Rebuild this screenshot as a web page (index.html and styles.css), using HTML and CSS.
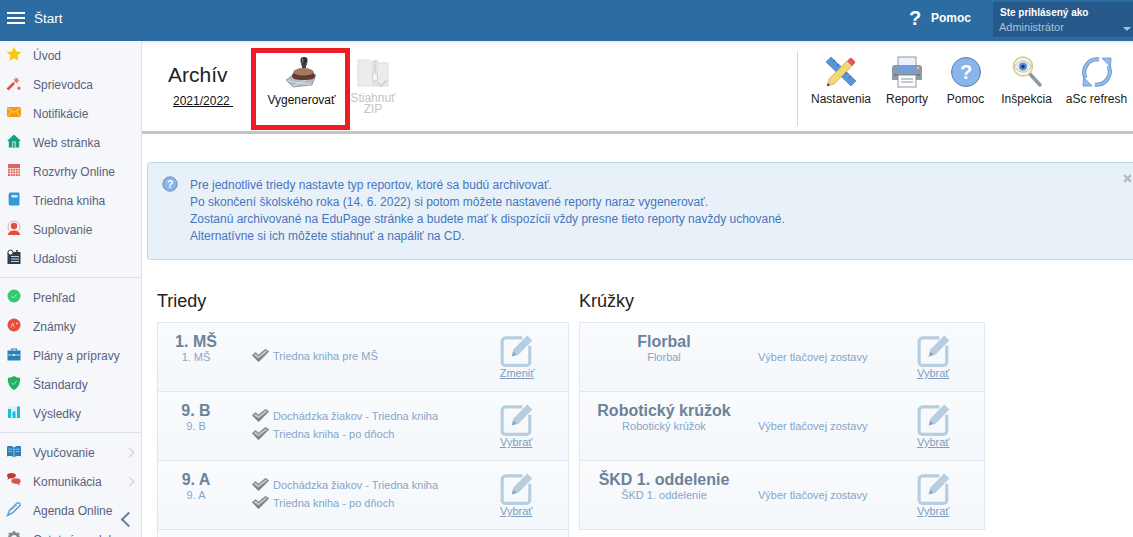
FILE: index.html
```html
<!DOCTYPE html>
<html>
  <head>
  <meta charset="utf-8">
  <title>Archív</title>
  <link rel="stylesheet" href="styles.css">
  </head>
  <body>
    <svg class="sprites" width="0" height="0">
      <symbol id="edit" viewBox="0 0 32 32">
        <path d="M21 4.500H5.500a3.500 3.500 0 0 0-3.500 3.500v19.500a3 3 0 0 0 3 3h20a3 3 0 0 0 3-3V12" fill="none" stroke="#b7cde0" stroke-width="3"/>
        <path d="M11 22l1.600-6.400L25.600 2.300l4.800 4.700L17.400 20.400z" fill="#b7cde0"/>
        <path d="M11 22l1.600-4.600 3 3z" fill="#8ba6bf"/>
      </symbol>
      <symbol id="check" viewBox="0 0 17 13">
        <path d="M0.300 6.300l3.200-2.800 3 2.400L13.500 0.300l3.300 2.300L6.500 12.800z" fill="#7d8185" stroke="#6a6f73" stroke-width="0.500"/>
        <path d="M1.500 6.300l2-1.700 3 2.500L13.600 1.300l1.800 1.100-8.900 7z" fill="#bfc2c4"/>
      </symbol>
    </svg>

    <header class="topbar">
      <div class="hamburger"><i></i><i></i><i></i></div>
      <div class="topbar-title">Štart</div>
      <div class="help"><span class="help-mark">?</span><span class="help-text">Pomoc</span></div>
      <div class="user">
        <div class="user-top">Ste prihlásený ako</div>
        <div class="user-name">Administrátor</div>
        <span class="user-caret"></span>
      </div>
    </header>

    <div class="layout">
      <nav class="sidebar">
        <div class="menu-group">
          <div class="menu-item">
            <svg class="menu-icon" viewBox="0 0 16 16"><path d="M8 .8l2.200 4.700 5.100.6-3.800 3.500 1 5.100L8 12.200l-4.500 2.500 1-5.100L.7 6.100l5.100-.6z" fill="#f7c812"/></svg>
            Úvod
          </div>
          <div class="menu-item">
            <svg class="menu-icon" viewBox="0 0 16 16"><path d="M1.500 14.500L8 8" stroke="#e74c3c" stroke-width="2.600"/><path d="M9.500 1.500l.8 2 2-.8-.5 2.200 2 1-2.200.7-.3 2.200-1.500-1.600-2 .5 1-2-1.300-1.700 2 .3z" fill="#ec7063"/><path d="M13 11.500v3.500M11.300 13.200h3.400" stroke="#e74c3c" stroke-width="1.200"/></svg>
            Sprievodca
          </div>
          <div class="menu-item">
            <svg class="menu-icon" viewBox="0 0 16 16"><rect x="1" y="3" width="14" height="10" fill="#f39c12"/><path d="M1 3.500l7 5 7-5M1 13l5-5.500M15 13l-5-5.500" fill="none" stroke="#fbdca6" stroke-width=".8"/></svg>
            Notifikácie
          </div>
          <div class="menu-item">
            <svg class="menu-icon" viewBox="0 0 16 16"><path d="M8 1.500L15 8h-1.800v6.500H2.800V8H1z" fill="#16a085"/><rect x="6.300" y="8.500" width="3.400" height="6" fill="#d8efe9"/><rect x="7.200" y="9.500" width="1.600" height="5" fill="#16a085"/></svg>
            Web stránka
          </div>
          <div class="menu-item">
            <svg class="menu-icon" viewBox="0 0 16 16"><rect x="2" y="2" width="12" height="12" fill="#d9695e"/><path d="M4.500 6v8M7 6v8M9.500 6v8M12 6v8M2 6.500h12M2 9h12M2 11.500h12" stroke="#f6d8d4" stroke-width=".9"/></svg>
            Rozvrhy Online
          </div>
          <div class="menu-item">
            <svg class="menu-icon" viewBox="0 0 16 16"><rect x="3" y="1.500" width="10.500" height="13" rx="1.200" fill="#3498db"/><rect x="5.500" y="4" width="6" height="2.500" fill="#d4eafa"/><path d="M3 3.500v9" stroke="#1f6fa8" stroke-width="1" stroke-dasharray="1 1"/></svg>
            Triedna kniha
          </div>
          <div class="menu-item">
            <svg class="menu-icon" viewBox="0 0 16 16"><circle cx="8" cy="7" r="6" fill="none" stroke="#f0a79f" stroke-width="1"/><circle cx="8" cy="6" r="3.200" fill="#e74c3c"/><path d="M1.800 15c.4-3 3-4.600 6.200-4.600s5.800 1.600 6.200 4.600z" fill="#e74c3c"/></svg>
            Suplovanie
          </div>
          <div class="menu-item">
            <svg class="menu-icon" viewBox="0 0 16 16"><rect x="1.500" y="3" width="13" height="12" fill="#2c3e50"/><circle cx="4.500" cy="3.500" r="2.500" fill="#fff" stroke="#2c3e50"/><path d="M5 7.500h8M5 10h8M5 12.500h8" stroke="#c8d0d8" stroke-width="1.200"/><path d="M11 1v3" stroke="#2c3e50" stroke-width="1.500"/></svg>
            Udalosti
          </div>
        </div>
        <div class="menu-group">
          <div class="menu-item">
            <svg class="menu-icon" viewBox="0 0 16 16"><circle cx="8" cy="8" r="6.500" fill="#2ecc71"/><path d="M5.500 8.200l1.800 1.800 3.300-3.600" fill="none" stroke="#c9f3da" stroke-width=".9"/></svg>
            Prehľad
          </div>
          <div class="menu-item">
            <svg class="menu-icon" viewBox="0 0 16 16"><circle cx="8" cy="8" r="6.500" fill="#e74c3c"/><path d="M5 10.500l1.700-4.500 1.600 4.500M10 6.500h2M11 5.500v2" fill="none" stroke="#f8c9c4" stroke-width=".9"/></svg>
            Známky
          </div>
          <div class="menu-item">
            <svg class="menu-icon" viewBox="0 0 16 16"><path d="M1.500 4.500h13v10h-13z" fill="#2980b9"/><path d="M5.500 4.500V3h5v1.500" fill="none" stroke="#2980b9" stroke-width="1.200"/><path d="M1.500 9h13" stroke="#cfe3f2" stroke-width=".9"/><rect x="7" y="8" width="2" height="2" fill="#cfe3f2"/></svg>
            Plány a prípravy
          </div>
          <div class="menu-item">
            <svg class="menu-icon" viewBox="0 0 16 16"><path d="M8 1c2 1.300 4 1.800 6.200 1.800 0 5.500-1.500 9.700-6.200 12.200C3.300 12.500 1.800 8.300 1.800 2.800 4 2.800 6 2.300 8 1z" fill="#27ae60"/><path d="M5.600 7.800l1.800 1.800 3.200-3.400" fill="none" stroke="#c9f3da" stroke-width=".9"/></svg>
            Štandardy
          </div>
          <div class="menu-item">
            <svg class="menu-icon" viewBox="0 0 16 16"><rect x="2" y="2.500" width="12" height="11.500" fill="#d6f1f8"/><rect x="2" y="5" width="3" height="9" fill="#1ebbdc"/><rect x="6.500" y="7.500" width="3" height="6.500" fill="#1ebbdc"/><rect x="11" y="2.500" width="3" height="11.500" fill="#1ebbdc"/></svg>
            Výsledky
          </div>
        </div>
        <div class="menu-group">
          <div class="menu-item">
            <svg class="menu-icon" viewBox="0 0 16 16"><path d="M1 3.500c2.500-.8 5-.5 7 1 2-1.500 4.500-1.800 7-1v10c-2.500-.8-5-.5-7 1-2-1.500-4.500-1.800-7-1z" fill="#2980b9"/><path d="M8 4.500v10M2.500 6c1.300-.2 2.500 0 3.700.5M2.500 8.500c1.300-.2 2.500 0 3.700.5M13.500 6c-1.300-.2-2.500 0-3.700.5M13.500 8.500c-1.300-.2-2.500 0-3.700.5" fill="none" stroke="#cfe3f2" stroke-width=".7"/></svg>
            Vyučovanie
            <span class="chevron"></span>
          </div>
          <div class="menu-item">
            <svg class="menu-icon" viewBox="0 0 16 16"><path d="M1 3.500C1 2 3 1 5.500 1S10 2 10 3.500 8 6.500 5.500 6.500c-.7 0-1.300 0-1.800-.2L1.500 8l.5-2.500C1.300 5 1 4.300 1 3.500z" fill="#c0392b"/><path d="M5 9c0-1.800 2.300-3 5-3s5 1.200 5 3c0 1-.6 1.700-1.400 2.200L14 14l-3-2c-3.500.3-6-1-6-3z" fill="#d9534f" stroke="#f5f7fa" stroke-width=".5"/></svg>
            Komunikácia
            <span class="chevron"></span>
          </div>
          <div class="menu-item">
            <svg class="menu-icon" viewBox="0 0 16 16"><path d="M1.500 14.500l2-5L11 2c1.500-1 3.500.5 3 2.500l-7.500 7.500z" fill="none" stroke="#5b9bd5" stroke-width="1.400"/><path d="M4.500 9.500L11 4M7 11.500L13 6" stroke="#5b9bd5" stroke-width=".9"/></svg>
            Agenda Online
          </div>
          <div class="menu-item">
            <svg class="menu-icon" viewBox="0 0 16 16"><circle cx="8" cy="8" r="4.500" fill="none" stroke="#7f8c8d" stroke-width="3"/><path d="M8 1v3M8 12v3M1 8h3M12 8h3M3 3l2 2M11 11l2 2M13 3l-2 2M5 11l-2 2" stroke="#7f8c8d" stroke-width="2"/></svg>
            Ostatné moduly
          </div>
        </div>
        <span class="collapse"></span>
      </nav>

      <main class="main">
        <section class="toolbar">
          <div class="archive">
            <div class="archive-title">Archív</div>
            <a class="archive-year">2021/2022&nbsp;</a>
          </div>
          <div class="generate">
            <svg class="tool-icon" viewBox="0 0 32 32">
              <path d="M1 23l13-10 17 5-4 10-19 2z" fill="#b4bbc2" stroke="#8f979e" stroke-width=".8"/>
              <path d="M2.500 23.500L15 26l13-7M8 29l7-3 11 1.500" fill="none" stroke="#dde1e4" stroke-width=".9"/>
              <path d="M7 19c0-3 3.500-5 11.500-5S30 16 30 19s-4 4-11.500 4S7 22 7 19z" fill="#5f3b30"/>
              <path d="M8 15.500c1-3 5-4.500 10.500-4.500s9.500 1.500 10.500 4.500c-1.800 2-5.700 3-10.500 3S9.800 17.500 8 15.500z" fill="#a47865"/>
              <path d="M17 11c0-2.500-.6-3.500-1.500-4.500h7c-.9 1-1.500 2-1.500 4.500z" fill="#3d4247"/>
              <rect x="15.500" y="0" width="7" height="7" rx="3" fill="#2f3338"/>
              <rect x="17" y="1.500" width="1.300" height="4" fill="#7b8187"/>
            </svg>
            <div class="tool-label">Vygenerovať</div>
          </div>
          <div class="download">
            <svg class="tool-icon" viewBox="0 0 32 32">
              <path d="M1 3h11l3 3h16v23H1z" fill="#ececec" stroke="#dcdcdc"/>
              <path d="M15 3h6v26h-6z" fill="#e3e3e3"/>
              <path d="M17 5h2M17 8h2M17 11h2M17 14h2" stroke="#cfcfcf" stroke-width="1.400"/>
              <rect x="15.500" y="16" width="5" height="8" rx="2.500" fill="#f6f6f6" stroke="#cccccc"/>
              <path d="M21 26l3 3 6-6" fill="none" stroke="#d4d4d4" stroke-width="2"/>
            </svg>
            <div class="tool-label">Stiahnuť ZIP</div>
          </div>
          <div class="tools">
            <div class="tool">
              <svg class="tool-icon" viewBox="0 0 32 32">
                <path d="M6 1l25 24-5 5L1 6z" fill="#5b94d6" stroke="#3f6ea8" stroke-width=".6"/>
                <path d="M8 6l2-2M12 10l2-2M16 14l2-2M20 18l2-2M24 22l2-2" stroke="#2f5d94" stroke-width="1"/>
                <path d="M2 30l2-7L22 5l5 5L9 28z" fill="#f5d76e" stroke="#b9973a" stroke-width=".6"/>
                <path d="M2 30l2-7 5 5z" fill="#e8c9a0"/>
                <path d="M2 30l.8-3 2.200 2.200z" fill="#333333"/>
                <path d="M22 5l2.500-2.500c1-1 2-.8 3 .2l2 2c.8 1 1 2 0 3L27 10z" fill="#e05a5a"/>
              </svg>
              <div class="tool-label">Nastavenia</div>
            </div>
            <div class="tool">
              <svg class="tool-icon" viewBox="0 0 32 32">
                <rect x="7" y="1" width="18" height="14" fill="#eef1f5" stroke="#8b97a5"/>
                <path d="M1 12a3 3 0 0 1 3-3h24a3 3 0 0 1 3 3v12H1z" fill="#8e9aa8"/>
                <rect x="7" y="9" width="18" height="6" fill="#6f9fe0"/>
                <rect x="26" y="11" width="2" height="2" fill="#e8d36a"/>
                <rect x="3" y="18" width="26" height="2" fill="#6f7b89"/>
                <rect x="7" y="19" width="18" height="12" fill="#fdfdfd" stroke="#8b97a5"/>
                <path d="M10 23h12M10 26h12" stroke="#8b97a5"/>
              </svg>
              <div class="tool-label">Reporty</div>
            </div>
            <div class="tool">
              <svg class="tool-icon" viewBox="0 0 32 32">
                <circle cx="16" cy="16" r="14.500" fill="#8ab4ec" stroke="#5d7fb5"/>
                <text x="16" y="23" text-anchor="middle" class="icon-mark">?</text>
              </svg>
              <div class="tool-label">Pomoc</div>
            </div>
            <div class="tool">
              <svg class="tool-icon" viewBox="0 0 32 32">
                <path d="M19 18l10 11" stroke="#8b98a5" stroke-width="3.500" stroke-linecap="round"/>
                <circle cx="12" cy="10.500" r="9.500" fill="#fbf6df" stroke="#d9c98a" stroke-width="1.500"/>
                <path d="M3.500 10.500C6 6.500 9 5 12 5s6 1.500 8.500 5.500C18 14.500 15 16 12 16s-6-1.500-8.500-5.500z" fill="#e8edf5" stroke="#8aa0bd" stroke-width=".6"/>
                <circle cx="12" cy="10.500" r="4" fill="#5f8dd0"/>
                <circle cx="12" cy="10.500" r="1.800" fill="#1f3555"/>
              </svg>
              <div class="tool-label">Inšpekcia</div>
            </div>
            <div class="tool">
              <svg class="tool-icon" viewBox="0 0 32 32">
                <path d="M18 3.500A13 13 0 0 0 4.500 22M14 28.500A13 13 0 0 0 27.500 10" fill="none" stroke="#5d85c0" stroke-width="4"/>
                <path d="M18 3.500A13 13 0 0 0 4.500 22M14 28.500A13 13 0 0 0 27.500 10" fill="none" stroke="#92bbee" stroke-width="2.600"/>
                <path d="M21 2h9l-.5 9zM11 30H2l.5-9z" fill="#92bbee" stroke="#5d85c0" stroke-width=".7"/>
              </svg>
              <div class="tool-label">aSc refresh</div>
            </div>
          </div>
        </section>

        <section class="info">
          <svg class="info-icon" viewBox="0 0 16 16">
            <circle cx="8" cy="8" r="7.200" fill="#8ab4ec" stroke="#5d7fb5" stroke-width=".8"/>
            <text x="8" y="12" text-anchor="middle" class="info-mark">?</text>
          </svg>
          <div class="info-text">
            <div>Pre jednotlivé triedy nastavte typ reportov, ktoré sa budú archivovať.</div>
            <div>Po skončení školského roka (14. 6. 2022) si potom môžete nastavené reporty naraz vygenerovať.</div>
            <div>Zostanú archivované na EduPage stránke a budete mať k dispozícii vždy presne tieto reporty navždy uchované.</div>
            <div>Alternatívne si ich môžete stiahnuť a napáliť na CD.</div>
          </div>
          <svg class="info-close" viewBox="0 0 8 8"><path d="M1 1l6 6M7 1L1 7" stroke="#b4bcc2" stroke-width="2"/></svg>
        </section>

        <section class="columns">
          <div class="col col-classes">
            <h2 class="col-title">Triedy</h2>
            <div class="list">
              <div class="row">
                <div class="names"><div class="name">1. MŠ</div><div class="sub">1. MŠ</div></div>
                <div class="reports">
                  <div class="report"><svg class="check"><use href="#check"/></svg>Triedna kniha pre MŠ</div>
                </div>
                <div class="action"><svg class="edit"><use href="#edit"/></svg><a class="action-link">Zmeniť</a></div>
              </div>
              <div class="row">
                <div class="names"><div class="name">9. B</div><div class="sub">9. B</div></div>
                <div class="reports">
                  <div class="report"><svg class="check"><use href="#check"/></svg>Dochádzka žiakov - Triedna kniha</div>
                  <div class="report"><svg class="check"><use href="#check"/></svg>Triedna kniha - po dňoch</div>
                </div>
                <div class="action"><svg class="edit"><use href="#edit"/></svg><a class="action-link">Vybrať</a></div>
              </div>
              <div class="row">
                <div class="names"><div class="name">9. A</div><div class="sub">9. A</div></div>
                <div class="reports">
                  <div class="report"><svg class="check"><use href="#check"/></svg>Dochádzka žiakov - Triedna kniha</div>
                  <div class="report"><svg class="check"><use href="#check"/></svg>Triedna kniha - po dňoch</div>
                </div>
                <div class="action"><svg class="edit"><use href="#edit"/></svg><a class="action-link">Vybrať</a></div>
              </div>
              <div class="row"></div>
            </div>
          </div>
          <div class="col col-clubs">
            <h2 class="col-title">Krúžky</h2>
            <div class="list">
              <div class="row">
                <div class="names"><div class="name">Florbal</div><div class="sub">Florbal</div></div>
                <div class="reports"><div class="report">Výber tlačovej zostavy</div></div>
                <div class="action"><svg class="edit"><use href="#edit"/></svg><a class="action-link">Vybrať</a></div>
              </div>
              <div class="row">
                <div class="names"><div class="name">Robotický krúžok</div><div class="sub">Robotický krúžok</div></div>
                <div class="reports"><div class="report">Výber tlačovej zostavy</div></div>
                <div class="action"><svg class="edit"><use href="#edit"/></svg><a class="action-link">Vybrať</a></div>
              </div>
              <div class="row">
                <div class="names"><div class="name">ŠKD 1. oddelenie</div><div class="sub">ŠKD 1. oddelenie</div></div>
                <div class="reports"><div class="report">Výber tlačovej zostavy</div></div>
                <div class="action"><svg class="edit"><use href="#edit"/></svg><a class="action-link">Vybrať</a></div>
              </div>
            </div>
          </div>
        </section>
      </main>
    </div>
  </body>
</html>
```

FILE: styles.css
```css
html, body {
  margin: 0;
  height: 100%;
  overflow: hidden;
}
body {
  display: flex;
  flex-direction: column;
  background: #fff;
  font-family: "Liberation Sans", Arial, sans-serif;
  font-size: 12px;
  color: #222;
}
.sprites {
  display: block;
}

/* top bar */
.topbar {
  flex: 0 0 41px;
  display: flex;
  align-items: center;
  background: #2b6ca3;
  color: #fff;
  box-sizing: border-box;
}
.hamburger {
  width: 18px;
  margin: -5px 0 0 7px;
  display: flex;
  flex-direction: column;
  gap: 3px;
}
.hamburger i {
  display: block;
  height: 2px;
  background: #fff;
}
.topbar-title {
  margin: -5px 0 0 9px;
  font-size: 13.500px;
}
.help {
  margin-left: auto;
  display: flex;
  align-items: center;
  margin-top: -5px;
}
.help-mark {
  font-size: 20px;
  font-weight: bold;
  width: 22px;
}
.help-text {
  font-weight: bold;
  width: 62px;
}
.user {
  position: relative;
  align-self: flex-start;
  margin-top: 2px;
  width: 140px;
  height: 35px;
  box-sizing: border-box;
  padding: 4px 0 0 7px;
  background: #25598a;
  border-radius: 2px 0 0 2px;
}
.user-top {
  font-size: 10px;
  font-weight: bold;
  line-height: 13px;
}
.user-name {
  font-size: 11px;
  line-height: 17px;
  margin-left: -1px;
  color: #a9c2da;
}
.user-caret {
  position: absolute;
  right: 2px;
  top: 25px;
  border: 4px solid transparent;
  border-top-color: #a9c2da;
}

.layout {
  flex: 1;
  display: flex;
  min-height: 0;
}

/* left menu */
.sidebar {
  position: relative;
  flex: 0 0 141px;
  background: #f5f7fa;
  border-right: 1px solid #dfe2e6;
  overflow: hidden;
}
.menu-group {
  padding: 5px 0 4px;
  border-bottom: 1px solid #dcdfe3;
}
.menu-group:first-child {
  padding-top: 0;
}
.menu-group:last-of-type {
  border-bottom: none;
}
.menu-item {
  position: relative;
  height: 29px;
  display: flex;
  align-items: center;
  color: #5a5f7d;
  white-space: nowrap;
}
.menu-icon {
  width: 16px;
  height: 16px;
  margin: -3px 11px 0 6px;
  flex: none;
}
.chevron {
  position: absolute;
  left: 126px;
  top: 11px;
  width: 6px;
  height: 6px;
  border-top: 1px solid #c9cdd2;
  border-right: 1px solid #c9cdd2;
  transform: rotate(45deg);
}
.collapse {
  position: absolute;
  left: 123px;
  top: 473px;
  width: 9px;
  height: 9px;
  border-bottom: 2px solid #6b8096;
  border-left: 2px solid #6b8096;
  transform: rotate(45deg);
}

/* toolbar */
.main {
  flex: 1;
  min-width: 0;
  overflow: hidden;
}
.toolbar {
  display: flex;
  height: 93px;
  box-sizing: border-box;
  border-bottom: 3px solid #c4c4c4;
  background: linear-gradient(#ececec, #fff 4px);
}
.archive {
  width: 109px;
  padding: 22px 0 0 26px;
  box-sizing: border-box;
}
.archive-title {
  font-size: 21px;
  line-height: 24px;
  color: #222;
}
.archive-year {
  display: inline-block;
  margin: 7px 0 0 5px;
  text-decoration: underline;
  color: #111;
}
.generate {
  width: 99px;
  height: 82px;
  margin-top: 7px;
  box-sizing: border-box;
  border: 5px solid #ed1c24;
  text-align: center;
  padding-top: 4px;
  color: #111;
}
.download {
  width: 46px;
  text-align: center;
  padding-top: 16px;
  color: #c4c4c4;
  line-height: 11px;
}
.tool-icon {
  display: block;
  width: 32px;
  height: 32px;
  margin: 0 auto 2px;
}
.download .tool-label {
  padding-top: 2px;
}
.generate .tool-label {
  margin-top: 4px;
  padding-left: 2px;
  line-height: 14px;
}
.tools {
  flex: none;
  margin: 10px -3px 5px auto;
  padding-left: 5px;
  border-left: 1px solid #d8d8d8;
  display: grid;
  grid-template-columns: 76px 56px 61px 61px 79px;
  height: 75px;
}
.tool {
  text-align: center;
  padding-top: 5px;
  color: #222;
}
.tool .tool-label {
  margin-top: 4px;
}
.icon-mark {
  font: bold 20px "Liberation Sans", sans-serif;
  fill: #fff;
}

/* info box */
.info {
  position: relative;
  box-sizing: border-box;
  width: 1000px;
  height: 98px;
  margin: 28px 0 0 5px;
  display: flex;
  padding: 14px 0 0 14px;
  background: #e8f1f8;
  border: 1px solid #bcdae9;
  border-radius: 3px;
}
.info-icon {
  flex: none;
  width: 16px;
  height: 16px;
  margin: -1px 12px 0 0;
}
.info-mark {
  font: bold 11px "Liberation Sans", sans-serif;
  fill: #fff;
}
.info-text {
  color: #4775c0;
  line-height: 17px;
}
.info-close {
  position: absolute;
  top: 11px;
  right: 14px;
  width: 9px;
  height: 9px;
}

/* lists */
.columns {
  display: flex;
  gap: 10px;
  margin-left: 15px;
}
.col-classes {
  flex: 0 0 412px;
}
.col-clubs {
  flex: 0 0 406px;
}
.col-title {
  margin: 31px 0 10px;
  font-size: 18px;
  line-height: 21px;
  font-weight: normal;
  color: #222;
}
.list {
  border: 1px solid #dfe8f0;
  border-bottom: none;
}
.row {
  position: relative;
  display: flex;
  height: 68px;
  border-bottom: 1px solid #dfe8f0;
  background: linear-gradient(#f9fbfd, #f4f7fb);
}
.names {
  flex: none;
  width: 76px;
  padding-top: 10px;
  text-align: center;
}
.name {
  font-size: 16px;
  line-height: 18px;
  font-weight: bold;
  color: #6c8299;
}
.sub {
  font-size: 11px;
  line-height: 13px;
  color: #86a5c8;
}
.reports {
  margin: -3px 0 0 18px;
  align-self: center;
}
.report {
  display: flex;
  align-items: center;
  height: 18px;
  font-size: 11px;
  color: #86a5c8;
}
.check {
  flex: none;
  width: 17px;
  height: 13px;
  margin-right: 4px;
}
.action {
  width: 102px;
  margin-left: auto;
  padding-top: 10px;
  display: grid;
  justify-content: center;
  justify-items: start;
  align-content: start;
}
.edit {
  display: block;
  width: 34px;
  height: 34px;
}
.action-link {
  font-size: 11px;
  line-height: 12px;
  color: #7d9dc0;
  text-decoration: underline;
}
.col-clubs .names {
  width: 168px;
}
.col-clubs .reports {
  margin: -1px 0 0 10px;
}
.col-clubs .action {
  width: 100px;
}
```
